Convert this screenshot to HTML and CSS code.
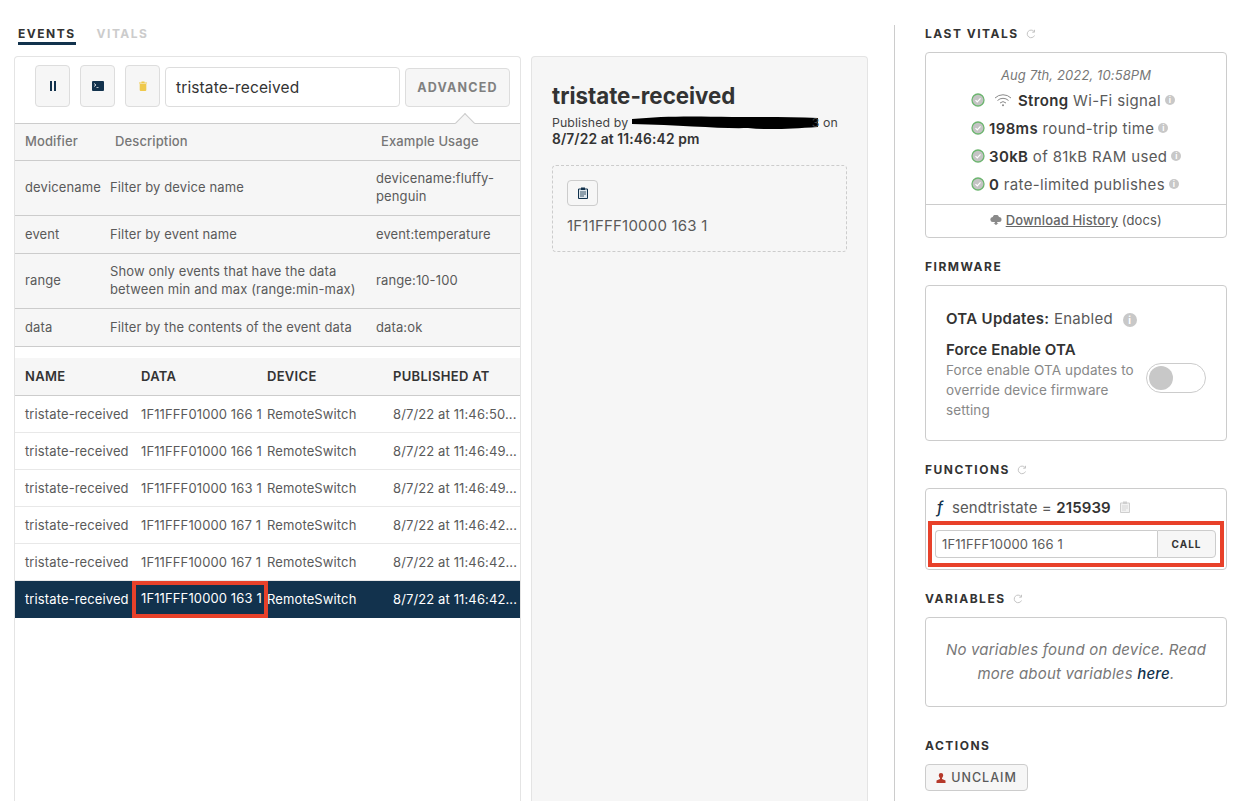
FILE: index.html
```html
<!DOCTYPE html>
<html>
<head lang="en">
    <meta charset="UTF-8">
    <title>Device events</title>
    <link rel="stylesheet" href="styles.css">
</head>
<body>
    <div id="main">
        <div id="eventsColumn">
            <div id="tabs">
                <span class="tab selected">EVENTS</span>
                <span class="tab">VITALS</span>
            </div>
            <div id="content">
                <div id="eventsPanel">
                    <div id="toolbar">
                        <span class="toolButton">
                            <svg width="8" height="10" viewBox="0 0 8 10"><path d="M1 0h2v10H1zM5 0h2v10H5z" fill="#12324d"/></svg>
                        </span>
                        <span class="toolButton">
                            <svg width="12" height="10" viewBox="0 0 12 10"><path d="M1 0h10a1 1 0 0 1 1 1v8a1 1 0 0 1-1 1H1a1 1 0 0 1-1-1V1a1 1 0 0 1 1-1z" fill="#12324d"/><path d="M2 2.500 4 4 2 5.500" fill="none" stroke="#fff" stroke-width=".8"/><path d="M4.500 6.500h2" stroke="#fff" stroke-width=".7"/></svg>
                        </span>
                        <span class="toolButton">
                            <svg width="8" height="10" viewBox="0 0 8 10"><path d="M0 1.500h8v1H0zM2.500 .5h3v1h-3zM.7 3h6.600v6a1 1 0 0 1-1 1H1.700a1 1 0 0 1-1-1z" fill="#efc94c"/></svg>
                        </span>
                        <div id="search">tristate-received</div>
                        <div id="advanced">ADVANCED</div>
                    </div>

                    <div id="modifiers">
                        <div class="modRow modHead">
                            <span>Modifier</span>
                            <span>Description</span>
                            <span>Example Usage</span>
                        </div>
                        <div class="modRow tall">
                            <span>devicename</span>
                            <span>Filter by device name</span>
                            <span>devicename:fluffy-penguin</span>
                        </div>
                        <div class="modRow">
                            <span>event</span>
                            <span>Filter by event name</span>
                            <span>event:temperature</span>
                        </div>
                        <div class="modRow tall">
                            <span>range</span>
                            <span>Show only events that have the data between min and max (range:min-max)</span>
                            <span>range:10-100</span>
                        </div>
                        <div class="modRow">
                            <span>data</span>
                            <span>Filter by the contents of the event data</span>
                            <span>data:ok</span>
                        </div>
                    </div>

                    <div id="eventList">
                        <div class="eventRow eventHead">
                            <span>NAME</span><span>DATA</span><span>DEVICE</span><span>PUBLISHED AT</span>
                        </div>
                        <div class="eventRow">
                            <span>tristate-received</span><span>1F11FFF01000 166 1</span><span>RemoteSwitch</span><span>8/7/22 at 11:46:50...</span>
                        </div>
                        <div class="eventRow">
                            <span>tristate-received</span><span>1F11FFF01000 166 1</span><span>RemoteSwitch</span><span>8/7/22 at 11:46:49...</span>
                        </div>
                        <div class="eventRow">
                            <span>tristate-received</span><span>1F11FFF01000 163 1</span><span>RemoteSwitch</span><span>8/7/22 at 11:46:49...</span>
                        </div>
                        <div class="eventRow">
                            <span>tristate-received</span><span>1F11FFF10000 167 1</span><span>RemoteSwitch</span><span>8/7/22 at 11:46:42...</span>
                        </div>
                        <div class="eventRow">
                            <span>tristate-received</span><span>1F11FFF10000 167 1</span><span>RemoteSwitch</span><span>8/7/22 at 11:46:42...</span>
                        </div>
                        <div class="eventRow selected">
                            <span>tristate-received</span><span class="marked">1F11FFF10000 163 1</span><span>RemoteSwitch</span><span>8/7/22 at 11:46:42...</span>
                        </div>
                    </div>
                </div>

                <div id="detailPanel">
                    <h2>tristate-received</h2>
                    <p id="published">Published by <span id="blob"><svg width="186" height="14" viewBox="0 0 186 14"><path d="M0 3C30 0 60 0 100 1c30 0 60 0 86 1v9c-30 2-50 3-70 1C90 13 50 9 0 8z" fill="#000"/></svg></span>3 on<br><b>8/7/22 at 11:46:42 pm</b></p>
                    <div id="payload">
                        <span id="copyButton">
                            <svg width="10" height="12" viewBox="0 0 10 12"><path d="M.5 2h9v9.500h-9z" fill="#dfe6ec" stroke="#12324d"/><path d="M3 .5h4v2.500H3z" fill="#12324d"/><path d="M2 5h6M2 7h6M2 9h4" stroke="#12324d" stroke-width=".8"/></svg>
                        </span>
                        <div id="payloadText">1F11FFF10000 163 1</div>
                    </div>
                </div>
            </div>
        </div>

        <div id="sideColumn">
            <h3>LAST VITALS <svg class="refresh" width="10" height="10" viewBox="0 0 10 10"><path d="M8.500 6.500A3.800 3.800 0 1 1 8 2.500M8.500 .8v2.400H6.200" fill="none" stroke="#c4c4c4" stroke-width="1"/></svg></h3>
            <div class="card" id="vitals">
                <div id="vitalsDate">Aug 7th, 2022, 10:58PM</div>
                <div class="vital">
                    <svg class="check" width="14" height="14" viewBox="0 0 14 14"><circle cx="7" cy="7" r="6" fill="#c4c4c4" stroke="#6cb56f" stroke-width="1.300"/><path d="M4.500 7.200 6.300 9l3.200-3.600" fill="none" stroke="#fff" stroke-width="1.200"/></svg>
                    <svg class="wifi" width="18" height="14" viewBox="0 0 18 14"><path d="M1 5a11.500 11.500 0 0 1 16 0M3.500 7.500a8 8 0 0 1 11 0M6 10a4.400 4.400 0 0 1 6 0" fill="none" stroke="#8a8a8a" stroke-width="1"/><circle cx="9" cy="12.300" r="1" fill="#8a8a8a"/></svg>
                    <span><b>Strong</b> Wi-Fi signal</span>
                    <span class="info">i</span>
                </div>
                <div class="vital">
                    <svg class="check" width="14" height="14" viewBox="0 0 14 14"><circle cx="7" cy="7" r="6" fill="#c4c4c4" stroke="#6cb56f" stroke-width="1.300"/><path d="M4.500 7.200 6.300 9l3.200-3.600" fill="none" stroke="#fff" stroke-width="1.200"/></svg>
                    <span><b>198ms</b> round-trip time</span>
                    <span class="info">i</span>
                </div>
                <div class="vital">
                    <svg class="check" width="14" height="14" viewBox="0 0 14 14"><circle cx="7" cy="7" r="6" fill="#c4c4c4" stroke="#6cb56f" stroke-width="1.300"/><path d="M4.500 7.200 6.300 9l3.200-3.600" fill="none" stroke="#fff" stroke-width="1.200"/></svg>
                    <span><b>30kB</b> of 81kB RAM used</span>
                    <span class="info">i</span>
                </div>
                <div class="vital">
                    <svg class="check" width="14" height="14" viewBox="0 0 14 14"><circle cx="7" cy="7" r="6" fill="#c4c4c4" stroke="#6cb56f" stroke-width="1.300"/><path d="M4.500 7.200 6.300 9l3.200-3.600" fill="none" stroke="#fff" stroke-width="1.200"/></svg>
                    <span><b>0</b> rate-limited publishes</span>
                    <span class="info">i</span>
                </div>
                <div id="download">
                    <svg width="12" height="10" viewBox="0 0 12 10"><path d="M3 7a2.500 2.500 0 0 1-.3-5A3.300 3.300 0 0 1 9 2a2.500 2.500 0 0 1 0 5H7.200v1.200H8.500L6 10 3.500 8.200h1.300V7z" fill="#8a8a8a"/></svg>
                    <u>Download History</u> <span id="docs">(docs)</span>
                </div>
            </div>

            <h3>FIRMWARE</h3>
            <div class="card" id="firmware">
                <div id="ota"><b>OTA Updates:</b> Enabled <span class="info big">i</span></div>
                <div id="forceRow">
                    <div id="forceText">
                        <b>Force Enable OTA</b>
                        <p>Force enable OTA updates to override device firmware setting</p>
                    </div>
                    <span id="toggle"><span id="knob"></span></span>
                </div>
            </div>

            <h3>FUNCTIONS <svg class="refresh" width="10" height="10" viewBox="0 0 10 10"><path d="M8.500 6.500A3.800 3.800 0 1 1 8 2.500M8.500 .8v2.400H6.200" fill="none" stroke="#c4c4c4" stroke-width="1"/></svg></h3>
            <div class="card" id="functions">
                <div id="functionLine">
                    <i id="fSign">f</i>
                    <span>sendtristate = <b>215939</b></span>
                    <svg width="10" height="12" viewBox="0 0 10 12"><path d="M.5 2h9v9.500h-9z" fill="#f2f2f2" stroke="#cfcfcf"/><path d="M3 .5h4v2.500H3z" fill="#cfcfcf"/><path d="M2 5h6M2 7h6M2 9h4" stroke="#cfcfcf" stroke-width=".8"/></svg>
                </div>
                <div id="callBox">
                    <div id="callInput">1F11FFF10000 166 1</div>
                    <div id="callButton">CALL</div>
                </div>
            </div>

            <h3>VARIABLES <svg class="refresh" width="10" height="10" viewBox="0 0 10 10"><path d="M8.500 6.500A3.800 3.800 0 1 1 8 2.500M8.500 .8v2.400H6.200" fill="none" stroke="#c4c4c4" stroke-width="1"/></svg></h3>
            <div class="card" id="variables">No variables found on device. Read more about variables <a id="here">here</a>.</div>

            <h3 id="actionsTitle">ACTIONS</h3>
            <div id="unclaim">
                <svg width="10" height="10" viewBox="0 0 10 10"><path d="M5 0a2.200 2.200 0 0 1 2.200 2.300c0 1.200-.6 2.200-1.200 2.700v1l3.500 1.500V10H.5V7.500L4 6V5c-.6-.5-1.200-1.500-1.200-2.700A2.200 2.200 0 0 1 5 0z" fill="#b5392b"/></svg>
                UNCLAIM
            </div>
        </div>
    </div>
</body>
</html>
```

FILE: styles.css
```css
*
{
    margin: 0;
    padding: 0;
    box-sizing: border-box;
}

html, body
{
    height: 801px;
    overflow: hidden;
    background: #ffffff;
}

body
{
    font-family: "Inter", "Liberation Sans", sans-serif;
    font-size: 13px;
    letter-spacing: .12px;
    color: #5a5a5a;
}

b
{
    font-weight: 600;
    color: #333333;
}

#main
{
    display: flex;
    height: 801px;
}

#eventsColumn
{
    width: 894px;
    padding: 25px 0 0 14px;
    display: flex;
    flex-direction: column;
}

/* tabs */
#tabs
{
    display: flex;
    gap: 21px;
    padding-left: 4px;
    height: 31px;
}
.tab
{
    height: 20px;
    font-size: 12px;
    line-height: 17px;
    font-weight: 700;
    letter-spacing: 1.5px;
    color: #cccccc;
}
.tab.selected
{
    color: #333333;
    border-bottom: 3px solid #12324d;
}

#content
{
    display: flex;
    gap: 10px;
    flex: 1;
    min-height: 0;
}

/* events panel */
#eventsPanel
{
    width: 507px;
    border: 1px solid #e4e4e4;
    border-bottom: 0;
    border-radius: 4px 4px 0 0;
}
#toolbar
{
    height: 66px;
    display: flex;
    align-items: flex-start;
    gap: 5px;
    padding: 8px 10px 0 20px;
    position: relative;
}
.toolButton
{
    width: 35px;
    height: 42px;
    margin-right: 5px;
    background: #f6f6f6;
    border: 1px solid #dddddd;
    border-radius: 4px;
    display: flex;
    align-items: center;
    justify-content: center;
}
.toolButton:nth-child(3)
{
    margin-right: 0;
}
#search
{
    width: 235px;
    height: 40px;
    margin-top: 2px;
    padding-left: 10px;
    border: 1px solid #dddddd;
    border-radius: 4px;
    font-size: 15.5px;
    line-height: 40px;
    color: #333333;
}
#advanced
{
    width: 105px;
    height: 39px;
    margin-top: 3px;
    background: #f6f6f6;
    border: 1px solid #dddddd;
    border-radius: 4px;
    text-align: center;
    font-size: 12.5px;
    line-height: 37px;
    font-weight: 700;
    letter-spacing: 1.2px;
    color: #808080;
}
/* little arrow pointing at the advanced button */
#advanced::after
{
    content: "";
    position: absolute;
    right: 48px;
    bottom: -7px;
    width: 13px;
    height: 13px;
    background: #f6f6f6;
    border-left: 1px solid #cccccc;
    border-top: 1px solid #cccccc;
    transform: rotate(45deg);
}

#modifiers
{
    background: #f6f6f6;
    border-top: 1px solid #cccccc;
}
.modRow
{
    height: 38px;
    padding: 0 0 2px 10px;
    display: grid;
    grid-template-columns: 85px 266px 1fr;
    align-items: center;
    border-bottom: 1px solid #cccccc;
    line-height: 18px;
}
.modRow.tall
{
    height: 55px;
}
.modHead
{
    height: 37px;
    font-weight: 500;
    color: #777777;
}
.modHead span:nth-child(n+2)
{
    margin-left: 5px;
}

#eventList
{
    margin-top: 11px;
}
.eventRow
{
    height: 37px;
    display: grid;
    grid-template-columns: 116px 126px 126px 1fr;
    align-items: center;
    padding-left: 10px;
    border-bottom: 1px solid #e8e8e8;
    white-space: nowrap;
}
.eventHead
{
    height: 38px;
    padding-bottom: 2px;
    background: #f6f6f6;
    border-bottom: 1px solid #cccccc;
    font-weight: 600;
    letter-spacing: .3px;
    color: #333333;
}
.eventRow.selected
{
    padding-bottom: 2px;
    background: #12324d;
    border-bottom: 0;
    color: #ffffff;
}
.marked
{
    position: relative;
    align-self: stretch;
    line-height: 35px;
}
.marked::after
{
    content: "";
    position: absolute;
    left: -9px;
    right: -1px;
    top: 0;
    bottom: -2px;
    border: 4px solid #e8412a;
}

/* detail panel */
#detailPanel
{
    width: 337px;
    padding: 25px 20px 0;
    background: #f6f6f6;
    border: 1px solid #e4e4e4;
    border-bottom: 0;
    border-radius: 4px 4px 0 0;
}
#detailPanel h2
{
    font-size: 22.3px;
    line-height: 28px;
    letter-spacing: 0;
    color: #333333;
}
#published
{
    margin-top: 4px;
    line-height: 17px;
    font-size: 12.3px;
    color: #444444;
    white-space: nowrap;
}
#published b
{
    font-size: 13.8px;
}
#blob
{
    display: inline-block;
    width: 186px;
    height: 14px;
    margin-right: -6px;
    vertical-align: -3px;
}
#payload
{
    height: 87px;
    margin-top: 17px;
    padding: 14px 14px 0;
    border: 1px dashed #cccccc;
    border-radius: 4px;
}
#copyButton
{
    width: 31px;
    height: 26px;
    border: 1px solid #cccccc;
    border-radius: 4px;
    display: flex;
    align-items: center;
    justify-content: center;
}
#payloadText
{
    margin-top: 11px;
    font-size: 15px;
    line-height: 18px;
    letter-spacing: .2px;
}

/* right column */
#sideColumn
{
    width: 333px;
    margin-top: 25px;
    padding-left: 30px;
    border-left: 1px solid #cccccc;
}
#sideColumn h3
{
    height: 27px;
    font-size: 12px;
    line-height: 17px;
    font-weight: 700;
    letter-spacing: 1.5px;
    color: #333333;
}
.refresh
{
    margin-left: 3px;
    vertical-align: -1px;
}
.card
{
    width: 302px;
    border: 1px solid #cccccc;
    border-radius: 4px;
}
#vitals
{
    height: 186px;
    margin-bottom: 20px;
    text-align: center;
}
#vitalsDate
{
    margin-top: 13px;
    height: 20px;
    font-size: 13px;
    line-height: 18px;
    font-style: italic;
    color: #777777;
}
.vital
{
    height: 28px;
    padding-left: 45px;
    display: flex;
    align-items: center;
    gap: 4px;
    font-size: 15px;
    letter-spacing: .35px;
}
.wifi
{
    margin: 0 2px 0 5px;
}
.info
{
    width: 10px;
    height: 10px;
    border-radius: 50%;
    background: #c8c8c8;
    color: #ffffff;
    font-size: 8px;
    line-height: 10px;
    font-weight: 700;
    text-align: center;
    display: inline-block;
    letter-spacing: 0;
}
.info.big
{
    width: 14px;
    height: 14px;
    margin-left: 5px;
    font-size: 10px;
    line-height: 14px;
    vertical-align: 0;
}
#download
{
    margin-top: 6px;
    height: 33px;
    border-top: 1px solid #cccccc;
    font-size: 13px;
    line-height: 30px;
    font-weight: 500;
    color: #666666;
}
#docs
{
    font-weight: 400;
    color: #555555;
}

#firmware
{
    height: 156px;
    margin-bottom: 20px;
    padding: 24px 20px 0;
}
#ota
{
    font-size: 15px;
    line-height: 18px;
    letter-spacing: .3px;
}
#forceRow
{
    margin-top: 12px;
    display: flex;
    justify-content: space-between;
    align-items: center;
}
#forceText
{
    width: 195px;
}
#forceText b
{
    font-size: 15px;
    line-height: 20px;
    display: block;
}
#forceText p
{
    font-size: 13.5px;
    line-height: 20px;
    color: #888888;
}
#toggle
{
    width: 60px;
    height: 30px;
    margin-bottom: 4px;
    flex-shrink: 0;
    padding: 2px;
    border: 1px solid #cccccc;
    border-radius: 15px;
    background: #ffffff;
}
#knob
{
    display: block;
    width: 24px;
    height: 24px;
    border-radius: 50%;
    background: #c8c8c8;
}

#functions
{
    height: 82px;
    margin-bottom: 20px;
    padding: 2px;
}
#functionLine
{
    height: 30px;
    padding: 2px 0 0 9px;
    display: flex;
    align-items: center;
    gap: 9px;
    font-size: 15px;
}
#fSign
{
    font-family: "Inter", "Liberation Sans", sans-serif;
    font-size: 15px;
    font-weight: 500;
    color: #12324d;
}
#callBox
{
    height: 46px;
    margin-top: 0;
    padding: 5px 4px 5px 3px;
    border: 4px solid #e8412a;
    display: flex;
}
#callInput
{
    flex: 1;
    padding-left: 6px;
    border: 1px solid #cccccc;
    border-right: 0;
    border-radius: 4px 0 0 4px;
    font-size: 13px;
    line-height: 27px;
}
#callButton
{
    width: 59px;
    background: #f6f6f6;
    border: 1px solid #cccccc;
    border-radius: 0 4px 4px 0;
    text-align: center;
    font-size: 10px;
    line-height: 27px;
    font-weight: 700;
    letter-spacing: 1px;
    color: #333333;
}

#variables
{
    height: 90px;
    padding: 20px 15px 0;
    text-align: center;
    font-size: 15px;
    line-height: 24px;
    letter-spacing: .2px;
    font-style: italic;
    color: #777777;
}
#here
{
    font-weight: 500;
    color: #12324d;
}
#actionsTitle
{
    margin-top: 30px;
}
#unclaim
{
    width: 103px;
    height: 27px;
    background: #f6f6f6;
    border: 1px solid #cccccc;
    border-radius: 4px;
    display: flex;
    align-items: center;
    justify-content: center;
    gap: 5px;
    font-size: 12.5px;
    font-weight: 500;
    letter-spacing: 1px;
}
```
